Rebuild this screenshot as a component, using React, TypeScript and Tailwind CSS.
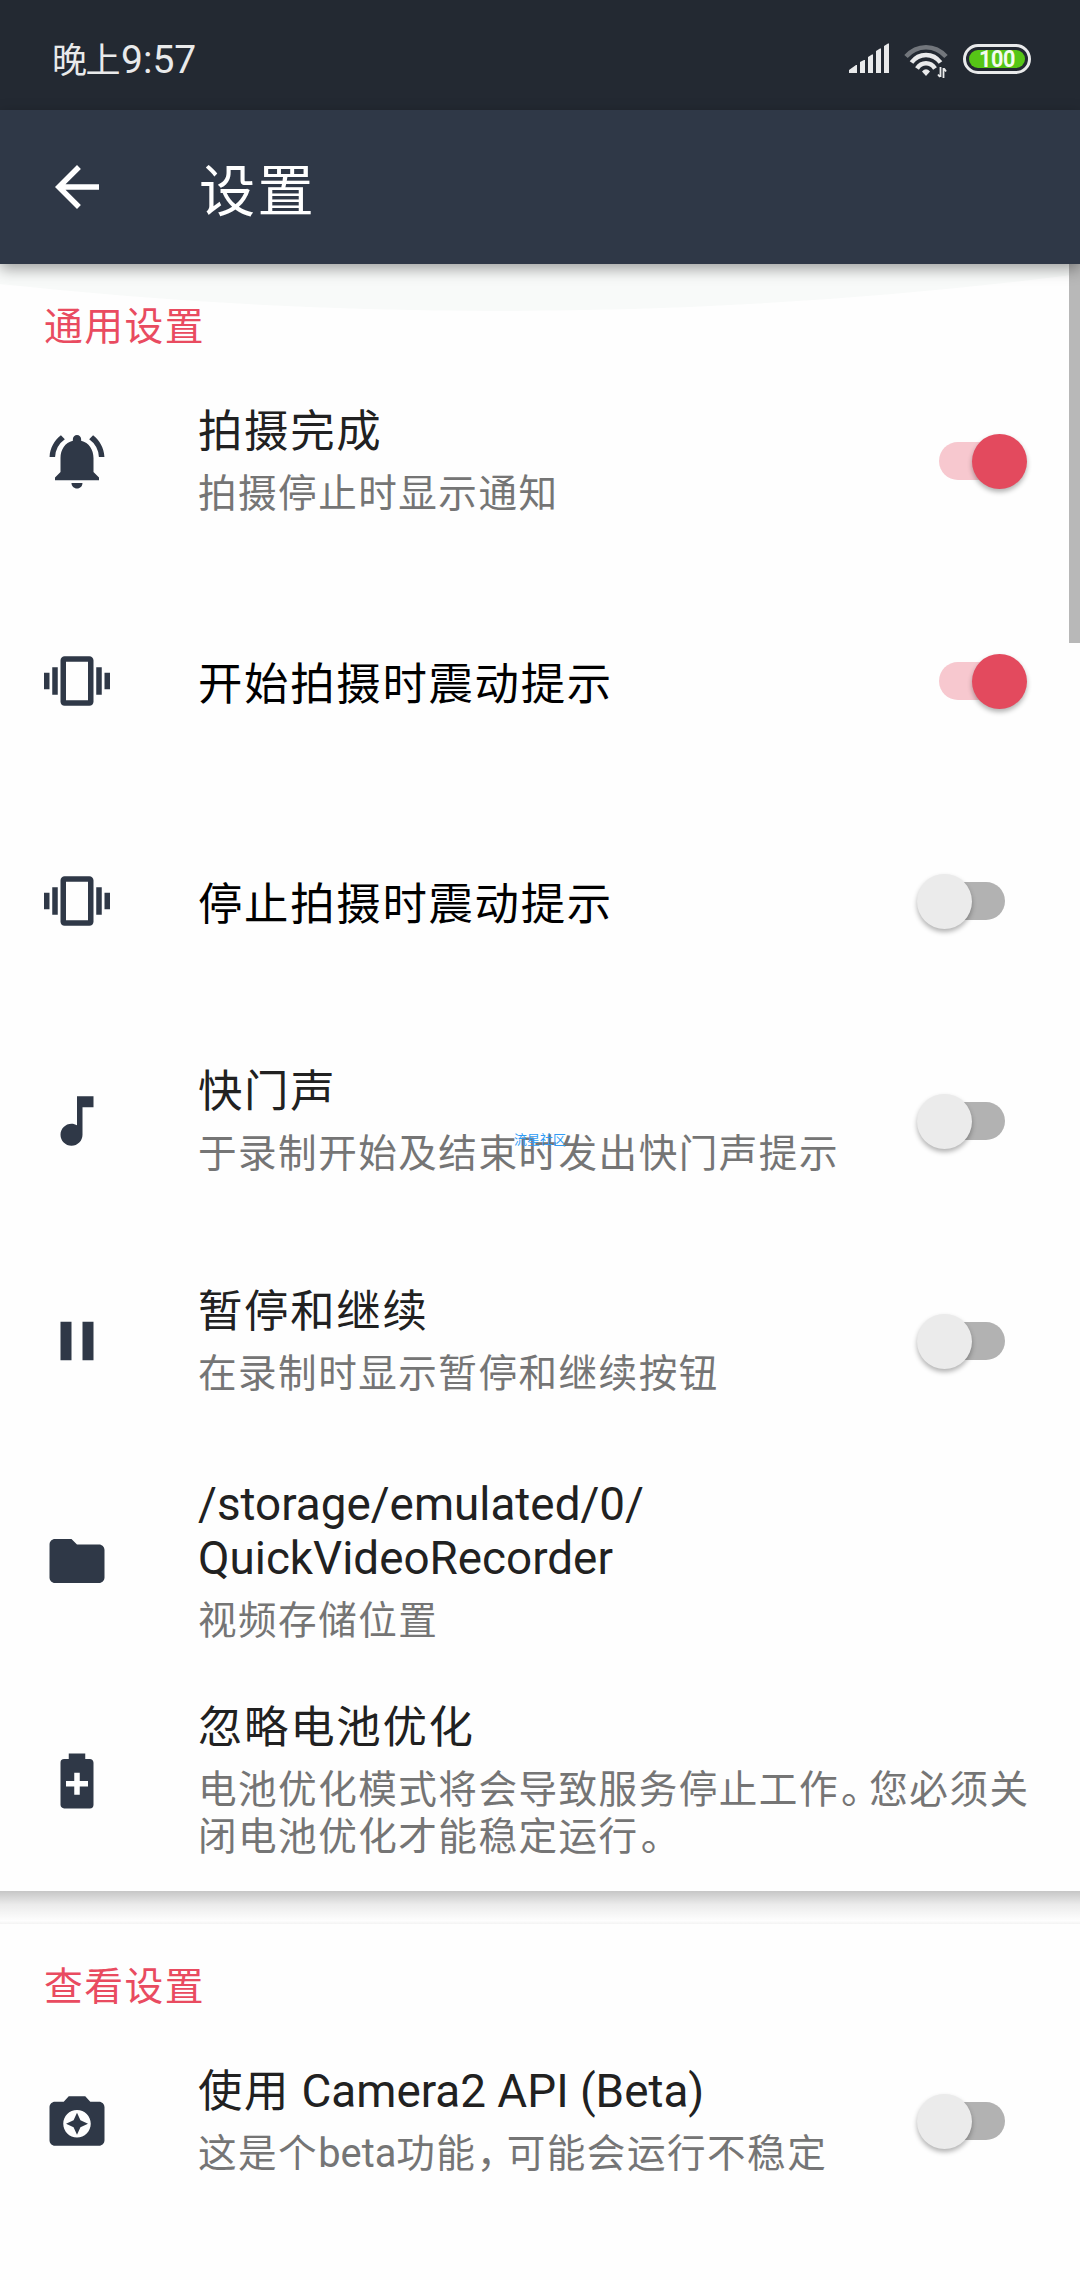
import { useState } from 'react';
import type { IconType } from 'react-icons';
import {
  MdArrowBack,
  MdCameraEnhance,
  MdFolder,
  MdMusicNote,
  MdNotificationsActive,
  MdPause,
  MdVibration,
} from 'react-icons/md';

type Setting = {
  id: string;
  icon: IconType | typeof BatteryPlusIcon;
  title: string;
  summary?: string;
  checked?: boolean;
};

const generalSettings: Setting[] = [
  { id: 'notify', icon: MdNotificationsActive, title: '拍摄完成', summary: '拍摄停止时显示通知', checked: true },
  { id: 'vibrate-start', icon: MdVibration, title: '开始拍摄时震动提示', checked: true },
  { id: 'vibrate-stop', icon: MdVibration, title: '停止拍摄时震动提示', checked: false },
  { id: 'shutter', icon: MdMusicNote, title: '快门声', summary: '于录制开始及结束时发出快门声提示', checked: false },
  { id: 'pause', icon: MdPause, title: '暂停和继续', summary: '在录制时显示暂停和继续按钮', checked: false },
  { id: 'folder', icon: MdFolder, title: '/storage/emulated/0/\nQuickVideoRecorder', summary: '视频存储位置' },
  {
    id: 'battery',
    icon: BatteryPlusIcon,
    title: '忽略电池优化',
    summary: '电池优化模式将会导致服务停止工作。您必须关\n闭电池优化才能稳定运行。',
  },
];

const viewSettings: Setting[] = [
  {
    id: 'camera2',
    icon: MdCameraEnhance,
    title: '使用 Camera2 API (Beta)',
    summary: '这是个beta功能，可能会运行不稳定',
    checked: false,
  },
];

function BatteryPlusIcon({ className }: { className?: string }) {
  return (
    <svg viewBox="0 0 24 24" fill="currentColor" className={className}>
      <path d="M16.67 4H15V2H9v2H7.33A1.33 1.33 0 0 0 6 5.33v15.34C6 21.4 6.6 22 7.33 22h9.34A1.33 1.33 0 0 0 18 20.67V5.33C18 4.6 17.4 4 16.67 4M16 14h-3v3h-2v-3H8v-2h3V9h2v3h3v2" />
    </svg>
  );
}

// Chinese runs are set a little smaller and wider than Latin ones, punctuation narrower
function MixedText({ text }: { text: string }) {
  const parts = text.match(/[\u4e00-\u9fff]+|[。，]|[^\u4e00-\u9fff。，]+/g) ?? [];
  return (
    <>
      {parts.map((part, i) => {
        if (part === '。') {
          return <span key={i} className="ml-[2px] leading-none tracking-[-11.5px]">{part}</span>;
        }
        if (part === '，') {
          return <span key={i} className="leading-none tracking-[-9.5px]">{part}</span>;
        }
        if (/^[\u4e00-\u9fff]/.test(part)) {
          return <span key={i} className="text-[0.97em] leading-none tracking-[0.038em]">{part}</span>;
        }
        return <span key={i}>{part}</span>;
      })}
    </>
  );
}

function SignalIcon() {
  return (
    <svg width="42" height="32" viewBox="0 0 42 32" fill="currentColor">
      <path d="M1 30v-3l7-5h1v8zM12 30V19l4-2h1v13zM20 30V14l4-2.500h1V30zM28 30V8l4-2.500h1V30zM36 30V3l4-2.500h1V30z" />
    </svg>
  );
}

function WifiIcon() {
  return (
    <svg width="44" height="36" viewBox="0 0 44 36" fill="none" stroke="currentColor" strokeWidth="4.500">
      <path d="M2 13.500C13 1 31 1 42 13.500" className="opacity-40" />
      <path d="M7.500 19.500C15 9.500 29 9.500 36.500 19.500" />
      <path d="M13 25.500C17.500 18.500 26.500 18.500 31 25.500" />
      <path d="M18 28.500Q22 24 26 28.500L22 33z" fill="currentColor" stroke="none" />
      <path d="M36.500 24v10M39.500 25v10M34 31.500l2 2.500M42 28.500l-2-3" strokeWidth="1.800" />
    </svg>
  );
}

function StatusBar() {
  return (
    <div className="flex h-[110px] items-center justify-between bg-[#232932] pt-[8px] pr-[49px] pl-[52px] text-[#e9eaeb]">
      <div className="flex items-baseline pt-[3px]">
        <span className="text-[35px] leading-[48px] tracking-[-1.5px]">晚上</span>
        <span className="ml-[2px] text-[39px] leading-[48px]">9:57</span>
      </div>
      <div className="flex items-center">
        <SignalIcon />
        <div className="ml-[14px] pt-[4px]">
          <WifiIcon />
        </div>
        <div className="ml-[15px] flex h-[30px] w-[68px] rounded-full border-[3px] border-current p-[3px]">
          <div className="flex flex-1 items-center justify-center rounded-full bg-[#56c516] text-[24px] leading-none font-bold text-[#f4fbf0]">
            <span className="scale-x-90 tracking-[-0.5px]">100</span>
          </div>
        </div>
      </div>
    </div>
  );
}

function Switch({ checked, onChange }: { checked: boolean; onChange: () => void }) {
  return (
    <button
      type="button"
      role="switch"
      aria-checked={checked}
      onClick={onChange}
      className="relative flex h-[55px] w-[110px] shrink-0 items-center justify-center"
    >
      <span className={`h-[38px] w-[66px] ${checked ? 'rounded-l-full bg-[#f7c8cf]' : 'rounded-r-full bg-[#b2b2b2]'}`} />
      <span
        className={`absolute top-0 size-[55px] rounded-full shadow-[0_3px_5px_rgba(0,0,0,0.3)] ${
          checked ? 'right-0 bg-[#e34a5e]' : 'left-0 bg-[#ebebeb]'
        }`}
      />
    </button>
  );
}

function SettingRow({ setting }: { setting: Setting }) {
  const [checked, setChecked] = useState(setting.checked ?? false);
  const Icon = setting.icon;

  return (
    <div className="flex h-[220px] items-center pr-[53px] pl-[44px]">
      <Icon className="size-[66px] shrink-0 text-[#2f3847]" />
      <div className="ml-[88px] flex flex-1 flex-col gap-[11px] pb-[1px] whitespace-pre">
        <div className={`text-[45.8px] leading-[54px] ${setting.summary ? 'text-[#212121]' : 'pt-[8px] text-black'}`}>
          <MixedText text={setting.title} />
        </div>
        {setting.summary && (
          <div className="text-[39.8px] leading-[47px] text-[#757575]">
            <MixedText text={setting.summary} />
          </div>
        )}
      </div>
      {setting.checked !== undefined && <Switch checked={checked} onChange={() => setChecked(!checked)} />}
    </div>
  );
}

function Section({ title, settings }: { title: string; settings: Setting[] }) {
  return (
    <section>
      <h2 className="h-[87px] pt-[39px] pl-[44px] text-[40px] leading-[47px] text-[#e94b60]">
        <MixedText text={title} />
      </h2>
      {settings.map((s) => (
        <SettingRow key={s.id} setting={s} />
      ))}
    </section>
  );
}

export default function App() {
  return (
    <div className="relative h-[2280px] w-[1080px] overflow-hidden bg-[#fefefe] font-[Roboto,'Noto_Sans_CJK_SC',sans-serif]">
      <StatusBar />
      <header className="relative z-10 flex h-[154px] items-center bg-[#2f3847] pl-[44px] text-white shadow-[0_5px_14px_rgba(0,0,0,0.36)]">
        <MdArrowBack className="size-[66px]" />
        <h1 className="ml-[89px] pt-[7px] text-[58px] leading-[66px]">
          <MixedText text="设置" />
        </h1>
      </header>

      <main className="relative">
        {/* overscroll glow */}
        <svg className="absolute top-0 left-0" width="1080" height="48" viewBox="0 0 1080 48">
          <path d="M0 0H1080V10A4629 4629 0 0 1 0 20Z" fill="#f8faf9" />
        </svg>
        <div className="relative">
          <Section title="通用设置" settings={generalSettings} />
        </div>
        <div className="h-[30px] bg-linear-to-b from-[#c6c6c6] via-[#ebebeb] via-45% to-[#fefefe]" />
        <div className="h-[3px] bg-linear-to-b from-[#fdfdfd] to-[#f3f3f3]" />
        <Section title="查看设置" settings={viewSettings} />

        <div className="absolute top-0 right-0 h-[379px] w-[11px] bg-[#b8b8b8]" />
        <div className="absolute top-[867px] left-[514px] text-[13px] leading-[18px] text-[#2f9bf5]">流星社区</div>
      </main>
    </div>
  );
}
